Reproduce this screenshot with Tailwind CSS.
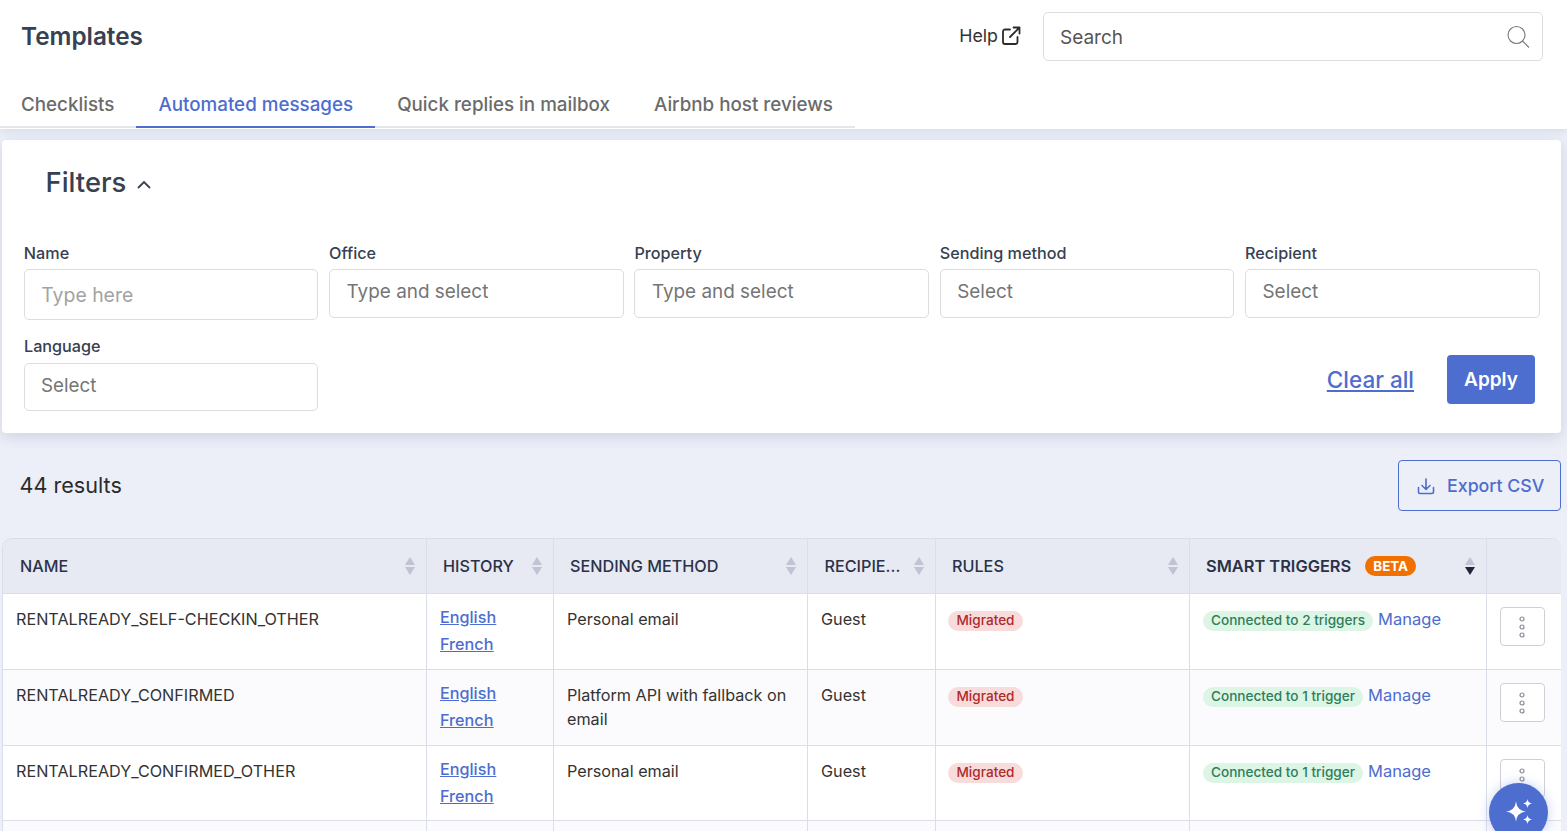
<!DOCTYPE html>
<html lang="en">
<head>
<meta charset="utf-8">
<title>Templates</title>
<script src="https://cdn.jsdelivr.net/npm/@tailwindcss/browser@4"></script>
</head>
<body class="font-['Inter',sans-serif] bg-[#eceff8] h-[831px] overflow-hidden relative text-[#333]">
<header class="bg-white h-[129px] shadow-[0_2px_8px_rgba(60,70,110,0.12)] relative">
  <div class="flex items-center pl-[21px] pr-[24px] pt-[12px]">
    <h1 class="text-[24.3px] leading-[49px] font-semibold text-[#374151]">Templates</h1>
    <a class="ml-auto flex items-center gap-[3px] text-[17.8px] text-[#333] pb-[1px]">Help
      <svg class="w-[20px] h-[20px]" viewBox="0 0 20 20" fill="none" stroke="#2b2b2b" stroke-width="1.8" stroke-linecap="round" stroke-linejoin="round"><path d="M9 3.5H4a2 2 0 0 0-2 2v10.500a2 2 0 0 0 2 2h10.500a2 2 0 0 0 2-2V11"/><path d="M9 11 18 2M12.500 1.500H18.500V7.500"/></svg>
    </a>
    <div class="ml-[22px] w-[500px] h-[49px] border border-[#dddddd] rounded-[5px] flex items-center pl-[16px] pr-[12px] text-[19px] text-[#555]">
      <span class="pt-[3px]">Search</span>
      <svg class="ml-auto w-[24px] h-[24px]" viewBox="0 0 24 24" fill="none" stroke="#777" stroke-width="1.100"><circle cx="10.500" cy="10" r="8.500"/><path d="m16.500 16 6.500 6.500"/></svg>
    </div>
  </div>
  <nav class="flex mt-[19px] ml-[-1px] w-max border-b-2 border-[#e4e6ec] h-[48px] text-[18.8px] font-medium text-[#6b6b6b]">
    <a class="px-[22px] h-[48px] leading-[49px]">Checklists</a>
    <a class="px-[22px] h-[48px] leading-[49px] text-[#4d6dcf] border-b-2 border-[#4d6dcf]">Automated messages</a>
    <a class="px-[22px] h-[48px] leading-[49px]">Quick replies in mailbox</a>
    <a class="px-[22px] h-[48px] leading-[49px]">Airbnb host reviews</a>
  </nav>
</header>
<main class="pl-[2px] pr-[6px] pt-[11px]">
  <section class="bg-white rounded-[4px] h-[293px] shadow-[0_4px_14px_rgba(60,70,110,0.16)] pt-[24px] px-[22px]">
    <div class="flex items-center pl-[21.500px] h-[37px] gap-[10px]">
      <h2 class="text-[27.4px] leading-[37px] font-medium text-[#374151]">Filters</h2>
      <svg class="w-[16px] h-[10px] mt-[4px]" viewBox="0 0 16 10" fill="none" stroke="#374151" stroke-width="1.800"><path d="m2 8 6-6 6 6"/></svg>
    </div>
    <div class="grid grid-cols-5 gap-x-[10.800px] mt-[42px] ml-[-0.2px] w-[1515.7px] items-start">
      <div>
        <label class="block text-[16.2px] leading-[20px] font-medium text-[#374151] mb-[6px]">Name</label>
        <div class="h-[51px] border border-[#dddddd] rounded-[5px] pl-[16.500px] text-[19.4px] leading-[51px] text-[#a3a3a3]">Type here</div>
      </div>
      <div>
        <label class="block text-[16.2px] leading-[20px] font-medium text-[#374151] mb-[6px]">Office</label>
        <div class="h-[49px] border border-[#dddddd] rounded-[5px] pl-[16.500px] text-[18.9px] leading-[44px] text-[#757575]">Type and select</div>
      </div>
      <div>
        <label class="block text-[16.2px] leading-[20px] font-medium text-[#374151] mb-[6px]">Property</label>
        <div class="h-[49px] border border-[#dddddd] rounded-[5px] pl-[16.500px] text-[18.9px] leading-[44px] text-[#757575]">Type and select</div>
      </div>
      <div>
        <label class="block text-[16.2px] leading-[20px] font-medium text-[#374151] mb-[6px]">Sending method</label>
        <div class="h-[49px] border border-[#dddddd] rounded-[5px] pl-[16.500px] text-[18.9px] leading-[44px] text-[#757575]">Select</div>
      </div>
      <div>
        <label class="block text-[16.2px] leading-[20px] font-medium text-[#374151] mb-[6px]">Recipient</label>
        <div class="h-[49px] border border-[#dddddd] rounded-[5px] pl-[16.500px] text-[18.9px] leading-[44px] text-[#757575]">Select</div>
      </div>
    </div>
    <div class="flex w-[1516px] mt-[16px] items-start">
      <div class="w-[294px]">
        <label class="block text-[16.2px] leading-[20px] font-medium text-[#374151] mb-[7px]">Language</label>
        <div class="h-[48px] border border-[#dddddd] rounded-[5px] pl-[16px] text-[18.8px] leading-[44px] text-[#757575]">Select</div>
      </div>
      <a class="ml-auto mt-[19px] text-[22.5px] leading-[49px] font-medium text-[#4d6dcf] underline">Clear all</a>
      <button class="ml-[33px] mr-[5px] mt-[19px] w-[88px] h-[49px] bg-[#4d6dcf] rounded-[4px] text-white text-[19px] font-semibold pt-[1px]">Apply</button>
    </div>
  </section>
  <div class="flex items-center justify-between mt-[27px] pl-[17.500px]">
    <span class="text-[21.6px] text-[#2b2b2b]">44 results</span>
    <button class="w-[163px] h-[51px] border border-[#4d6dcf] rounded-[4px] flex items-center justify-start gap-[12px] pl-[18px] pt-[1px] text-[17.8px] font-medium text-[#4d6dcf]">
      <svg class="w-[18px] h-[18px]" viewBox="0 0 18 18" fill="none" stroke="#4d6dcf" stroke-width="1.600" stroke-linecap="round" stroke-linejoin="round"><path d="M1.500 10.500v4.500a1.500 1.500 0 0 0 1.500 1.500h12a1.500 1.500 0 0 0 1.500-1.500v-4.500"/><path d="M9 2v10M5 8.500l4 4 4-4"/></svg>
      Export CSV
    </button>
  </div>
  <div class="mt-[27px] border-t border-l border-[#dadeeb] rounded-tl-[10px] rounded-tr-[10px] overflow-hidden">
    <table class="table-fixed w-[1558px] border-separate border-spacing-0 text-[16.2px] text-[#333]">
      <colgroup><col class="w-[424px]"><col class="w-[127px]"><col class="w-[254px]"><col class="w-[128px]"><col class="w-[254px]"><col class="w-[297px]"><col class="w-[74px]"></colgroup>
      <thead>
        <tr class="h-[55px] bg-[#e7eaf3] text-[#2b3247] text-[16.2px] font-medium text-left">
          <th class="font-medium border-r border-b border-[#dadeeb] pl-[17px] pr-[10px]"><div class="flex items-center justify-between"><span>NAME</span><svg class="w-[12px] h-[20px]" viewBox="0 0 12 20"><path d="M6 1l5 8H1z" fill="#bfc3d2"/><path d="M6 19l5-8H1z" fill="#bfc3d2"/></svg></div></th>
          <th class="font-medium border-r border-b border-[#dadeeb] pl-[16px] pr-[10px]"><div class="flex items-center justify-between"><span>HISTORY</span><svg class="w-[12px] h-[20px]" viewBox="0 0 12 20"><path d="M6 1l5 8H1z" fill="#bfc3d2"/><path d="M6 19l5-8H1z" fill="#bfc3d2"/></svg></div></th>
          <th class="font-medium border-r border-b border-[#dadeeb] pl-[16px] pr-[10px]"><div class="flex items-center justify-between"><span>SENDING METHOD</span><svg class="w-[12px] h-[20px]" viewBox="0 0 12 20"><path d="M6 1l5 8H1z" fill="#bfc3d2"/><path d="M6 19l5-8H1z" fill="#bfc3d2"/></svg></div></th>
          <th class="font-medium border-r border-b border-[#dadeeb] pl-[16.500px] pr-[10px]"><div class="flex items-center justify-between"><span>RECIPIE...</span><svg class="w-[12px] h-[20px]" viewBox="0 0 12 20"><path d="M6 1l5 8H1z" fill="#bfc3d2"/><path d="M6 19l5-8H1z" fill="#bfc3d2"/></svg></div></th>
          <th class="font-medium border-r border-b border-[#dadeeb] pl-[16px] pr-[10px]"><div class="flex items-center justify-between"><span>RULES</span><svg class="w-[12px] h-[20px]" viewBox="0 0 12 20"><path d="M6 1l5 8H1z" fill="#bfc3d2"/><path d="M6 19l5-8H1z" fill="#bfc3d2"/></svg></div></th>
          <th class="font-semibold border-r border-b border-[#dadeeb] pl-[16px] pr-[10px]"><div class="flex items-center"><span class="text-[16.4px]">SMART TRIGGERS</span><span class="ml-[14px] h-[20px] w-[51px] rounded-full bg-[#f07000] text-white text-[13.400px] font-bold leading-[20px] text-center">BETA</span><svg class="ml-auto w-[12px] h-[20px]" viewBox="0 0 12 20"><path d="M6 1l5 8H1z" fill="#bfc3d2"/><path d="M6 19l5-8H1z" fill="#22263a"/></svg></div></th>
          <th class="border-b border-[#dadeeb]"></th>
        </tr>
      </thead>
      <tbody class="align-top">
        <tr class="h-[76px] bg-white">
          <td class="border-r border-b border-[#dadeeb] pl-[13px] pt-[13px] leading-[24px]">RENTALREADY_SELF-CHECKIN_OTHER</td>
          <td class="border-r border-b border-[#dadeeb] pl-[13px] pt-[10px] leading-[27px] font-medium text-[#4d6dcf] underline"><a class="block">English</a><a class="block">French</a></td>
          <td class="border-r border-b border-[#dadeeb] pl-[13px] pt-[13px] leading-[24px]">Personal email</td>
          <td class="border-r border-b border-[#dadeeb] pl-[13px] pt-[13px] leading-[24px]">Guest</td>
          <td class="border-r border-b border-[#dadeeb] pl-[12px] pt-[17px]"><span class="block w-[75px] h-[20px] rounded-full bg-[#f8dcdc] text-[#b02a2a] text-[13.6px] font-medium leading-[19px] text-center">Migrated</span></td>
          <td class="border-r border-b border-[#dadeeb] pl-[13px] pt-[13px]"><div class="flex items-start gap-[5px]"><span class="mt-[4px] h-[20px] px-[8px] rounded-full bg-[#dcf5e5] text-[#2f7d5c] text-[13.6px] font-medium leading-[19px] whitespace-nowrap">Connected to 2 triggers</span><a class="text-[#4d6dcf] text-[16.5px] leading-[24px]">Manage</a></div></td>
          <td class="border-b border-[#dadeeb] pl-[13px] pt-[13px]"><button class="w-[45px] h-[39px] bg-white border border-[#cfcfd6] rounded-[4px] flex items-center justify-center pr-[1px]"><svg class="w-[6px] h-[22px]" viewBox="0 0 6 22" fill="none" stroke="#8a8a96" stroke-width="1.200"><circle cx="3" cy="3" r="2"/><circle cx="3" cy="11" r="2"/><circle cx="3" cy="19" r="2"/></svg></button></td>
        </tr>
        <tr class="h-[76px] bg-[#fbfbfd]">
          <td class="border-r border-b border-[#dadeeb] pl-[13px] pt-[13px] leading-[24px]">RENTALREADY_CONFIRMED</td>
          <td class="border-r border-b border-[#dadeeb] pl-[13px] pt-[10px] leading-[27px] font-medium text-[#4d6dcf] underline"><a class="block">English</a><a class="block">French</a></td>
          <td class="border-r border-b border-[#dadeeb] pl-[13px] pt-[13px] pr-[13px] leading-[24px]">Platform API with fallback on email</td>
          <td class="border-r border-b border-[#dadeeb] pl-[13px] pt-[13px] leading-[24px]">Guest</td>
          <td class="border-r border-b border-[#dadeeb] pl-[12px] pt-[17px]"><span class="block w-[75px] h-[20px] rounded-full bg-[#f8dcdc] text-[#b02a2a] text-[13.6px] font-medium leading-[19px] text-center">Migrated</span></td>
          <td class="border-r border-b border-[#dadeeb] pl-[13px] pt-[13px]"><div class="flex items-start gap-[5px]"><span class="mt-[4px] h-[20px] px-[8px] rounded-full bg-[#dcf5e5] text-[#2f7d5c] text-[13.6px] font-medium leading-[19px] whitespace-nowrap">Connected to 1 trigger</span><a class="text-[#4d6dcf] text-[16.5px] leading-[24px]">Manage</a></div></td>
          <td class="border-b border-[#dadeeb] pl-[13px] pt-[13px]"><button class="w-[45px] h-[39px] bg-white border border-[#cfcfd6] rounded-[4px] flex items-center justify-center pr-[1px]"><svg class="w-[6px] h-[22px]" viewBox="0 0 6 22" fill="none" stroke="#8a8a96" stroke-width="1.200"><circle cx="3" cy="3" r="2"/><circle cx="3" cy="11" r="2"/><circle cx="3" cy="19" r="2"/></svg></button></td>
        </tr>
        <tr class="h-[75px] bg-white">
          <td class="border-r border-b border-[#dadeeb] pl-[13px] pt-[13px] leading-[24px]">RENTALREADY_CONFIRMED_OTHER</td>
          <td class="border-r border-b border-[#dadeeb] pl-[13px] pt-[10px] leading-[27px] font-medium text-[#4d6dcf] underline"><a class="block">English</a><a class="block">French</a></td>
          <td class="border-r border-b border-[#dadeeb] pl-[13px] pt-[13px] leading-[24px]">Personal email</td>
          <td class="border-r border-b border-[#dadeeb] pl-[13px] pt-[13px] leading-[24px]">Guest</td>
          <td class="border-r border-b border-[#dadeeb] pl-[12px] pt-[17px]"><span class="block w-[75px] h-[20px] rounded-full bg-[#f8dcdc] text-[#b02a2a] text-[13.6px] font-medium leading-[19px] text-center">Migrated</span></td>
          <td class="border-r border-b border-[#dadeeb] pl-[13px] pt-[13px]"><div class="flex items-start gap-[5px]"><span class="mt-[4px] h-[20px] px-[8px] rounded-full bg-[#dcf5e5] text-[#2f7d5c] text-[13.6px] font-medium leading-[19px] whitespace-nowrap">Connected to 1 trigger</span><a class="text-[#4d6dcf] text-[16.5px] leading-[24px]">Manage</a></div></td>
          <td class="border-b border-[#dadeeb] pl-[13px] pt-[13px]"><button class="w-[45px] h-[39px] bg-white border border-[#cfcfd6] rounded-[4px] flex items-center justify-center pr-[1px]"><svg class="w-[6px] h-[22px]" viewBox="0 0 6 22" fill="none" stroke="#8a8a96" stroke-width="1.200"><circle cx="3" cy="3" r="2"/><circle cx="3" cy="11" r="2"/><circle cx="3" cy="19" r="2"/></svg></button></td>
        </tr>
        <tr class="h-[75px] bg-[#fbfbfd]">
          <td class="border-r border-[#dadeeb]"></td><td class="border-r border-[#dadeeb]"></td><td class="border-r border-[#dadeeb]"></td><td class="border-r border-[#dadeeb]"></td><td class="border-r border-[#dadeeb]"></td><td class="border-r border-[#dadeeb]"></td><td></td>
        </tr>
      </tbody>
    </table>
  </div>
</main>
<button class="absolute left-[1489px] top-[783px] w-[59px] h-[59px] rounded-full bg-[#4d6dcf] shadow-[0_0_12px_rgba(77,109,207,0.3)] flex items-start justify-center pt-[15px]">
  <svg class="w-[28px] h-[28px]" viewBox="0 0 28 28" fill="white"><path d="M11 3.500 Q12 12.500 21 13.500 Q12 14.500 11 23.500 Q10 14.500 1 13.500 Q10 12.500 11 3.500Z"/><path d="M22.500 1 Q23 5 27 5.500 Q23 6 22.500 10 Q22 6 18 5.500 Q22 5 22.500 1Z"/><path d="M22.500 17 Q23 21 27 21.500 Q23 22 22.500 26 Q22 22 18 21.500 Q22 21 22.500 17Z"/></svg>
</button>
</body>
</html>
